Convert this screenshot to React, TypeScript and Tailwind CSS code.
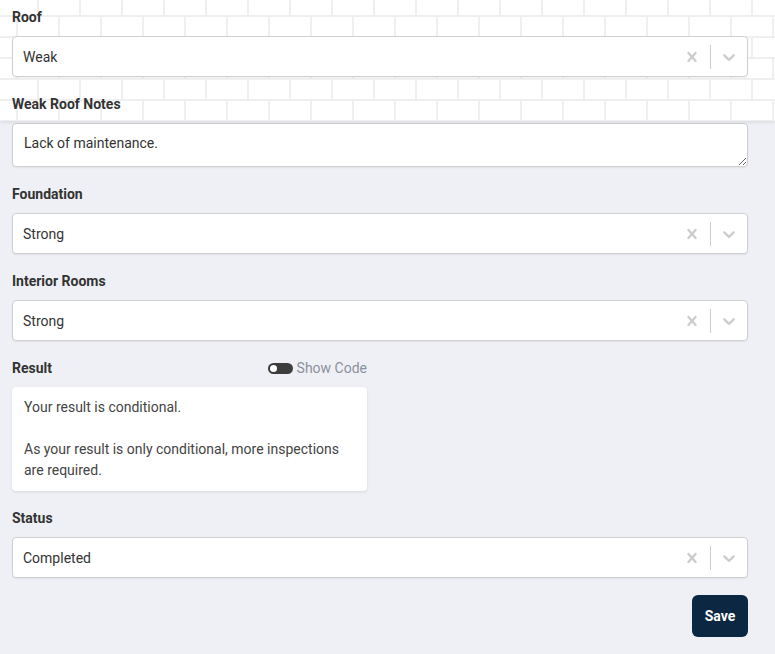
import { useState } from "react"

function CrossIcon() {
  return (
    <svg viewBox="0 0 20 20" width="20" height="20" fill="#cccccc" aria-hidden="true">
      <path d="M14.348 14.849c-0.469 0.469-1.229 0.469-1.697 0l-2.651-3.030-2.651 3.029c-0.469 0.469-1.229 0.469-1.697 0-0.469-0.469-0.469-1.229 0-1.697l2.758-3.15-2.759-3.152c-0.469-0.469-0.469-1.228 0-1.697s1.228-0.469 1.697 0l2.652 3.031 2.651-3.031c0.469-0.469 1.228-0.469 1.697 0s0.469 1.229 0 1.697l-2.758 3.152 2.758 3.15c0.469 0.469 0.469 1.229 0 1.698z" />
    </svg>
  )
}

function ChevronIcon() {
  return (
    <svg viewBox="0 0 20 20" width="20" height="20" fill="#cccccc" aria-hidden="true">
      <path d="M4.516 7.548c0.436-0.446 1.043-0.481 1.576 0l3.908 3.747 3.908-3.747c0.533-0.481 1.141-0.446 1.574 0 0.436 0.445 0.408 1.197 0 1.615-0.406 0.418-4.695 4.502-4.695 4.502-0.217 0.223-0.502 0.335-0.787 0.335s-0.57-0.112-0.789-0.335c0 0-4.287-4.084-4.695-4.502s-0.436-1.17 0-1.615z" />
    </svg>
  )
}

function Label({ children }: { children: React.ReactNode }) {
  return <div className="text-sm leading-5 font-bold text-[#333]">{children}</div>
}

function Select({ value }: { value: string }) {
  return (
    <div className="mt-[9px] h-[41px] flex items-center bg-white border border-[#cfcfcf] rounded shadow-[0_1px_2px_rgba(0,0,0,0.06)]">
      <div className="flex-1 pl-[10px] text-sm text-[#333]">{value}</div>
      <div className="w-9 flex justify-center">
        <CrossIcon />
      </div>
      <div className="w-px h-6 bg-[#cccccc]" />
      <div className="w-9 flex justify-center">
        <ChevronIcon />
      </div>
    </div>
  )
}

function BrickPattern() {
  return (
    <svg className="absolute inset-0 w-full h-full" aria-hidden="true">
      <defs>
        <pattern id="bricks" x="0" y="15" width="42" height="42" patternUnits="userSpaceOnUse">
          <rect x="0" y="0" width="42" height="2" fill="#efefef" />
          <rect x="0" y="21" width="42" height="2" fill="#efefef" />
          <rect x="16" y="0" width="2" height="21" fill="#efefef" />
          <rect x="37" y="21" width="2" height="21" fill="#efefef" />
        </pattern>
      </defs>
      <rect width="100%" height="100%" fill="#ffffff" />
      <rect width="100%" height="100%" fill="url(#bricks)" />
    </svg>
  )
}

export default function App() {
  const [showCode, setShowCode] = useState(false)

  return (
    <div className="min-h-screen bg-[#eff0f5] font-['Roboto',sans-serif]">
      {/* Header area with brick backdrop */}
      <div className="relative shadow-[0_2px_3px_rgba(0,0,0,0.07)]">
        <BrickPattern />
        <div className="relative pl-3 pr-[27px] pt-[7px] pb-[7px]">
          <Label>Roof</Label>
          <Select value="Weak" />
          <div className="mt-[17px]">
            <Label>Weak Roof Notes</Label>
          </div>
        </div>
      </div>

      <div className="pl-3 pr-[27px] pt-[2px] pb-4 flex flex-col">
        <textarea
          defaultValue="Lack of maintenance."
          className="h-[44px] w-full bg-white border border-[#cfcfcf] rounded px-[11px] py-[9px] text-sm leading-5 text-[#333] resize-y outline-none shadow-[0_1px_2px_rgba(0,0,0,0.06)]"
        />

        <div className="mt-[17px]">
          <Label>Foundation</Label>
          <Select value="Strong" />
        </div>

        <div className="mt-[17px]">
          <Label>Interior Rooms</Label>
          <Select value="Strong" />
        </div>

        <div className="mt-[17px] w-[355px]">
          <div className="flex items-center justify-between">
            <Label>Result</Label>
            <button
              onClick={() => setShowCode(!showCode)}
              className="flex items-center gap-1 text-sm leading-5 text-[#8b919c]"
            >
              <span className="w-[25px] h-[11px] rounded-full bg-[#3d3d3d] flex items-center px-[2px]">
                <span className="w-[7px] h-[7px] rounded-full bg-white" />
              </span>
              Show Code
            </button>
          </div>
          <div className="mt-[9px] bg-white rounded px-3 py-[10px] text-sm leading-[21px] text-[#444] shadow-[0_1px_3px_rgba(0,0,0,0.1)]">
            <p>Your result is conditional.</p>
            <p className="mt-[21px]">As your result is only conditional, more inspections are required.</p>
          </div>
        </div>

        <div className="mt-[17px]">
          <Label>Status</Label>
          <Select value="Completed" />
        </div>

        <div className="mt-[17px] flex justify-end">
          <button className="w-14 h-[42px] rounded-md bg-[#0b2742] text-white text-sm font-bold">Save</button>
        </div>
      </div>
    </div>
  )
}
